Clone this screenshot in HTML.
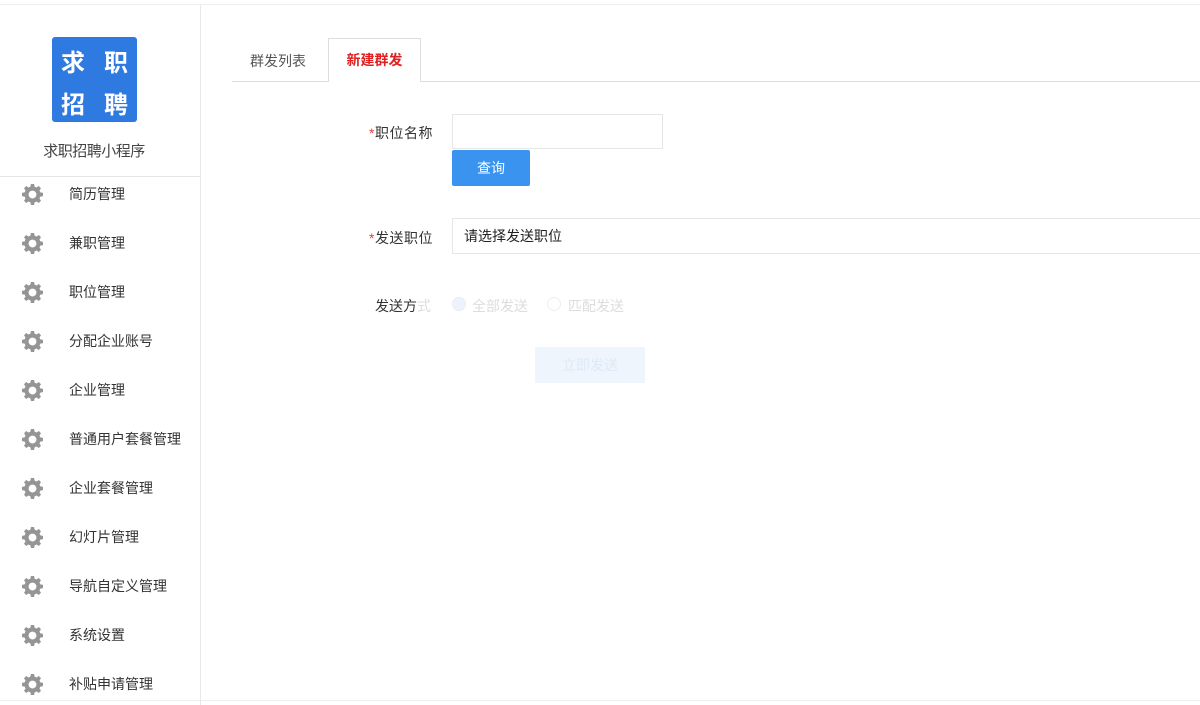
<!DOCTYPE html>
<html><head><meta charset="utf-8"><style>
body{margin:0;width:1200px;height:705px;background:#fff;font-family:"Liberation Sans","Noto Sans CJK SC",sans-serif;overflow:hidden;position:relative;font-size:14px;color:#333}
.top{position:absolute;left:0;top:4px;width:1200px;height:1px;background:#eee}
.side{position:absolute;left:0;top:5px;width:200px;height:700px;border-right:1px solid #e8e8e8}
.logo{position:absolute;left:52px;top:37px;width:85px;height:85px;background:#2f7ae0;border-radius:3px;color:#fff;font-size:24px;font-weight:bold}
.logo span{position:absolute}
.title{position:absolute;left:0;width:188px;top:140px;text-align:center;font-size:15px;color:#444;letter-spacing:-0.5px}
.sep{position:absolute;left:0;top:176px;width:200px;height:1px;background:#e5e5e5}
.item{position:absolute;left:0;width:200px;height:24px}
.item svg{position:absolute;left:22px;top:2px}
.item span{position:absolute;left:69px;top:2px;font-size:14px;color:#333}
.tabs{position:absolute;left:232px;top:81px;width:968px;height:1px;background:#ddd}
.tab1{position:absolute;left:250px;top:51px;font-size:14px;color:#555}
.tab2{position:absolute;left:328px;top:38px;width:93px;height:44px;background:#fff;border:1px solid #ddd;border-bottom:none;box-sizing:border-box;color:#e02020;font-weight:bold;text-align:center;line-height:42px;font-size:14px}
.lbl{position:absolute;font-size:14px;color:#333}
.lbl b{color:#e04040;font-weight:normal}
</style></head><body>
<div class="top"></div>
<div class="side"></div>
<div class="logo"><span style="left:9px;top:6px">求</span><span style="left:52px;top:6px">职</span><span style="left:9px;top:48px">招</span><span style="left:52px;top:48px">聘</span></div>
<div class="title">求职招聘小程序</div>
<div class="sep"></div>
<svg width="0" height="0" style="position:absolute"><defs><g id="g"><path fill="#959595" d="M10.2 0h3.6l.6 3 2.2 1 2.6-1.7 2.5 2.5-1.7 2.6 1 2.2 3 .6v3.6l-3 .6-1 2.2 1.7 2.6-2.5 2.5-2.6-1.7-2.2 1-.6 3h-3.6l-.6-3-2.2-1-2.6 1.7-2.5-2.5 1.7-2.6-1-2.2-3-.6v-3.6l3-.6 1-2.2-1.7-2.6 2.5-2.5 2.6 1.7 2.2-1z"/><circle cx="12" cy="12" r="4.5" fill="#fff"/></g></defs></svg>
<div class="item" style="top:182px"><svg width="21" height="21" viewBox="0 0 24 24"><use href="#g"/></svg><span>简历管理</span></div>
<div class="item" style="top:231px"><svg width="21" height="21" viewBox="0 0 24 24"><use href="#g"/></svg><span>兼职管理</span></div>
<div class="item" style="top:280px"><svg width="21" height="21" viewBox="0 0 24 24"><use href="#g"/></svg><span>职位管理</span></div>
<div class="item" style="top:329px"><svg width="21" height="21" viewBox="0 0 24 24"><use href="#g"/></svg><span>分配企业账号</span></div>
<div class="item" style="top:378px"><svg width="21" height="21" viewBox="0 0 24 24"><use href="#g"/></svg><span>企业管理</span></div>
<div class="item" style="top:427px"><svg width="21" height="21" viewBox="0 0 24 24"><use href="#g"/></svg><span>普通用户套餐管理</span></div>
<div class="item" style="top:476px"><svg width="21" height="21" viewBox="0 0 24 24"><use href="#g"/></svg><span>企业套餐管理</span></div>
<div class="item" style="top:525px"><svg width="21" height="21" viewBox="0 0 24 24"><use href="#g"/></svg><span>幻灯片管理</span></div>
<div class="item" style="top:574px"><svg width="21" height="21" viewBox="0 0 24 24"><use href="#g"/></svg><span>导航自定义管理</span></div>
<div class="item" style="top:623px"><svg width="21" height="21" viewBox="0 0 24 24"><use href="#g"/></svg><span>系统设置</span></div>
<div class="item" style="top:672px"><svg width="21" height="21" viewBox="0 0 24 24"><use href="#g"/></svg><span>补贴申请管理</span></div>
<div class="tabs"></div>
<div class="tab1">群发列表</div>
<div class="tab2">新建群发</div>
<div class="lbl" style="left:369px;top:123px;letter-spacing:0.5px"><b>*</b>职位名称</div>
<div style="position:absolute;left:452px;top:114px;width:211px;height:35px;border:1px solid #e6e6e6;box-sizing:border-box"></div>
<div style="position:absolute;left:452px;top:150px;width:78px;height:36px;background:#3a93ef;border-radius:2px;color:#fff;text-align:center;line-height:36px;font-size:14px">查询</div>
<div class="lbl" style="left:369px;top:228px;letter-spacing:0.5px"><b>*</b>发送职位</div>
<div style="position:absolute;left:452px;top:218px;width:760px;height:36px;border:1px solid #e6e6e6;box-sizing:border-box;padding-left:11px;line-height:34px;font-size:14px;color:#222">请选择发送职位</div>
<div class="lbl" style="left:375px;top:296px">发送方<span style="color:#ddd">式</span></div>
<div style="position:absolute;left:452px;top:297px;width:12px;height:12px;border-radius:50%;border:1px solid #e6eefa;background:#eef3fb"></div>
<div style="position:absolute;left:472px;top:296px;color:#ddd">全部发送</div>
<div style="position:absolute;left:547px;top:297px;width:12px;height:12px;border-radius:50%;border:1px solid #eee"></div>
<div style="position:absolute;left:568px;top:296px;color:#ddd">匹配发送</div>
<div style="position:absolute;left:535px;top:347px;width:110px;height:36px;background:#eef5fd;color:#dde9f7;text-align:center;line-height:36px">立即发送</div>
<div style="position:absolute;left:0;top:700px;width:1200px;height:1px;background:#eee"></div>
</body></html>
